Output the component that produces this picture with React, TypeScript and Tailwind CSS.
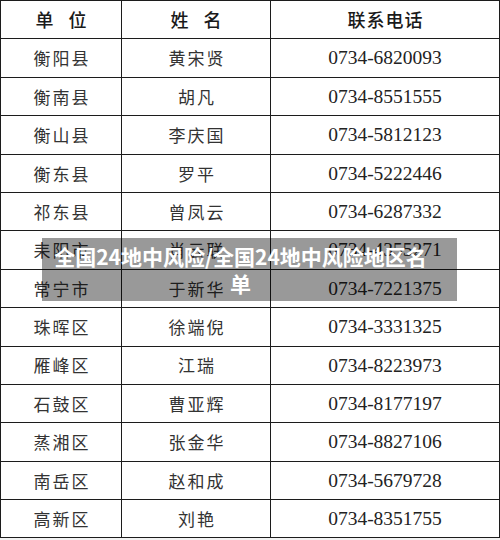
import React from "react";

type Row = { unit: string; name: string; phone: string };

const rows: Row[] = [
  { unit: "衡阳县", name: "黄宋贤", phone: "0734-6820093" },
  { unit: "衡南县", name: "胡凡", phone: "0734-8551555" },
  { unit: "衡山县", name: "李庆国", phone: "0734-5812123" },
  { unit: "衡东县", name: "罗平", phone: "0734-5222446" },
  { unit: "祁东县", name: "曾凤云", phone: "0734-6287332" },
  { unit: "耒阳市", name: "肖云联", phone: "0734-4355271" },
  { unit: "常宁市", name: "于新华", phone: "0734-7221375" },
  { unit: "珠晖区", name: "徐端倪", phone: "0734-3331325" },
  { unit: "雁峰区", name: "江瑞", phone: "0734-8223973" },
  { unit: "石鼓区", name: "曹亚辉", phone: "0734-8177197" },
  { unit: "蒸湘区", name: "张金华", phone: "0734-8827106" },
  { unit: "南岳区", name: "赵和成", phone: "0734-5679728" },
  { unit: "高新区", name: "刘艳", phone: "0734-8351755" },
];

const cjk = "font-['Noto_Sans_CJK_SC',sans-serif]";
const cell = "border border-[#1c1c1c] p-0 text-center align-middle";

function Spaced({ text, gap }: { text: string; gap: string }) {
  // each glyph in its own span so trailing spacing doesn't shift centring
  return (
    <div className={`flex justify-center ${gap}`}>
      {text.split("").map((c, i) => (
        <span key={i}>{c}</span>
      ))}
    </div>
  );
}

export default function App() {
  return (
    <div className="relative w-[500px] h-[540px] bg-[#f2f2f2] overflow-hidden">
      <table className="w-[499px] border-collapse bg-white table-fixed">
        <colgroup>
          <col className="w-[121px]" />
          <col className="w-[149px]" />
          <col className="w-[229px]" />
        </colgroup>
        <thead>
          <tr className="h-[38.4px]">
            <th className={`${cell} ${cjk} text-[18px] font-medium text-[#1a1a1a]`}>
              <Spaced text="单位" gap="gap-[15px]" />
            </th>
            <th className={`${cell} ${cjk} text-[18px] font-medium text-[#1a1a1a]`}>
              <Spaced text="姓名" gap="gap-[15px]" />
            </th>
            <th className={`${cell} ${cjk} text-[18px] font-medium text-[#1a1a1a]`}>
              <Spaced text="联系电话" gap="gap-[1px]" />
            </th>
          </tr>
        </thead>
        <tbody>
          {rows.map((r) => (
            <tr key={r.unit} className="h-[38.4px]">
              <td className={`${cell} ${cjk} text-[17px] text-[#333]`}>
                <Spaced text={r.unit} gap="gap-[2px]" />
              </td>
              <td className={`${cell} ${cjk} text-[17px] text-[#333]`}>
                <Spaced text={r.name} gap="gap-[2px]" />
              </td>
              <td className={`${cell} font-['Liberation_Serif',serif] text-[19.5px] text-[#222]`}>
                {r.phone}
              </td>
            </tr>
          ))}
        </tbody>
      </table>

      {/* caption overlay */}
      <div className="absolute left-[42px] top-[238px] w-[415px] h-[63px] bg-black/40 pl-[8px] pr-[26px] flex items-center">
        <p className={`w-full text-center text-white font-bold text-[21px] leading-[27px] ${cjk}`}>
          全国24地中风险/全国24地中风险地区名单
        </p>
      </div>
    </div>
  );
}
